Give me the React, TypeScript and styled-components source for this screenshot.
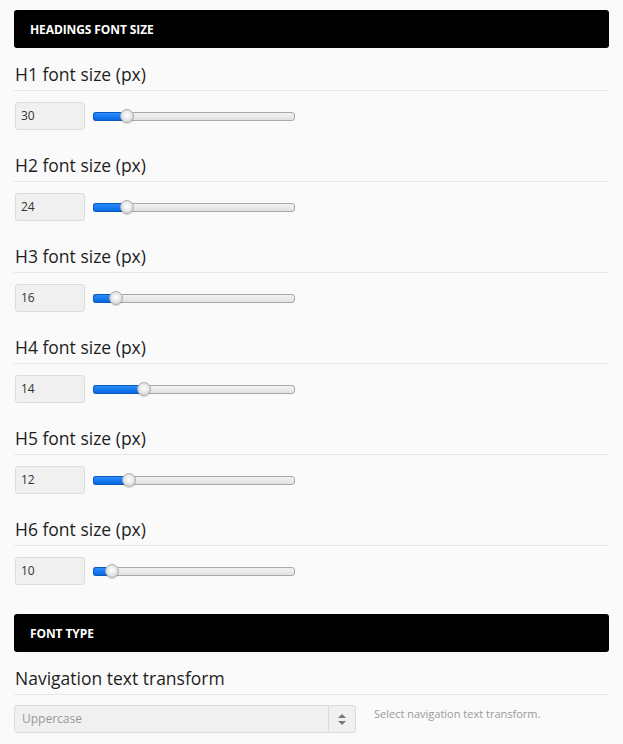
import React from "react";
import styled, { createGlobalStyle } from "styled-components";

const Global = createGlobalStyle`
  html, body { margin: 0; padding: 0; background: #fafafa; }
  body { font-family: "Open Sans", "Noto Sans", sans-serif; color: #333; }
`;

const Page = styled.div`
  padding: 10px 14px 20px 14px;
  display: flex;
  flex-direction: column;
`;

const SectionBar = styled.div<{ $top?: number }>`
  height: 38px;
  margin-top: ${(p) => p.$top ?? 0}px;
  background: #000;
  border-radius: 3px;
  display: flex;
  align-items: center;
  padding-left: 16px;
  color: #fff;
  font-size: 12px;
  font-weight: 700;
  letter-spacing: -0.1px;
  text-transform: uppercase;
`;

const Field = styled.div<{ $first?: boolean }>`
  margin-top: ${(p) => (p.$first ? 14 : 23)}px;
  display: flex;
  flex-direction: column;
`;

const FieldLabel = styled.div`
  font-size: 17.5px;
  font-weight: 500;
  line-height: 24px;
  color: #1e1e1e;
  padding: 0 0 4px 1px;
  border-bottom: 1px solid #e6e6e6;
`;

const Row = styled.div`
  margin-top: 11px;
  display: flex;
  align-items: center;
`;

const NumberBox = styled.div`
  box-sizing: border-box;
  width: 70px;
  height: 28px;
  margin-left: 1px;
  background: #f0f0f0;
  border: 1px solid #dcdcdc;
  border-radius: 3px;
  font-size: 12px;
  line-height: 26px;
  padding-left: 5px;
  color: #333;
`;

const Track = styled.div`
  position: relative;
  box-sizing: border-box;
  width: 202px;
  height: 9px;
  margin-left: 8px;
  border: 1px solid #a8a8a8;
  border-radius: 3px;
  background: linear-gradient(#f2f2f2, #e2e2e2);
`;

const Fill = styled.div`
  position: absolute;
  left: -1px;
  top: -1px;
  bottom: -1px;
  border-radius: 3px 0 0 3px;
  background: linear-gradient(#2b8cff, #0868e0);
  border: 1px solid #0a5bc0;
  border-right: none;
`;

const Handle = styled.div`
  position: absolute;
  top: 50%;
  width: 14px;
  height: 14px;
  margin: -7px 0 0 -7px;
  box-sizing: border-box;
  border-radius: 50%;
  border: 1px solid #b0b0b0;
  background: radial-gradient(circle at 50% 45%, #ffffff 0%, #f0f0f0 35%, #c4c4c4 100%);
  box-shadow: 0 1px 1px rgba(0, 0, 0, 0.15);
`;

const SelectRow = styled.div`
  margin-top: 10px;
  display: flex;
  align-items: flex-start;
`;

const SelectBox = styled.div`
  box-sizing: border-box;
  width: 342px;
  height: 28px;
  background: #f0f0f0;
  border: 1px solid #dcdcdc;
  border-radius: 3px;
  display: flex;
  align-items: stretch;
`;

const SelectValue = styled.div`
  flex: 1;
  font-size: 12px;
  line-height: 26px;
  padding-left: 7px;
  color: #999;
`;

const SelectArrow = styled.div`
  width: 26px;
  border-left: 1px solid #dcdcdc;
  display: flex;
  align-items: center;
  justify-content: center;
`;

const Hint = styled.div`
  margin-left: 18px;
  margin-top: 1px;
  font-size: 11px;
  line-height: 16px;
  color: #999;
`;

const sliders = [
  { label: "H1 font size (px)", value: "30", pos: 16.5 },
  { label: "H2 font size (px)", value: "24", pos: 16.5 },
  { label: "H3 font size (px)", value: "16", pos: 11 },
  { label: "H4 font size (px)", value: "14", pos: 25 },
  { label: "H5 font size (px)", value: "12", pos: 17.5 },
  { label: "H6 font size (px)", value: "10", pos: 9 },
];

export default function App() {
  return (
    <>
      <Global />
      <Page>
        <SectionBar>Headings font size</SectionBar>
        {sliders.map((s, i) => (
          <Field key={s.label} $first={i === 0}>
            <FieldLabel>{s.label}</FieldLabel>
            <Row>
              <NumberBox>{s.value}</NumberBox>
              <Track>
                <Fill style={{ width: `${s.pos}%` }} />
                <Handle style={{ left: `${s.pos}%` }} />
              </Track>
            </Row>
          </Field>
        ))}
        <SectionBar $top={29}>Font type</SectionBar>
        <Field $first>
          <FieldLabel>Navigation text transform</FieldLabel>
          <SelectRow>
            <SelectBox>
              <SelectValue>Uppercase</SelectValue>
              <SelectArrow>
                <svg width="8" height="11" viewBox="0 0 8 11">
                  <path d="M4 0 L8 4 L0 4 Z" fill="#777" />
                  <path d="M0 7 L8 7 L4 11 Z" fill="#777" />
                </svg>
              </SelectArrow>
            </SelectBox>
            <Hint>Select navigation text transform.</Hint>
          </SelectRow>
        </Field>
      </Page>
    </>
  );
}
